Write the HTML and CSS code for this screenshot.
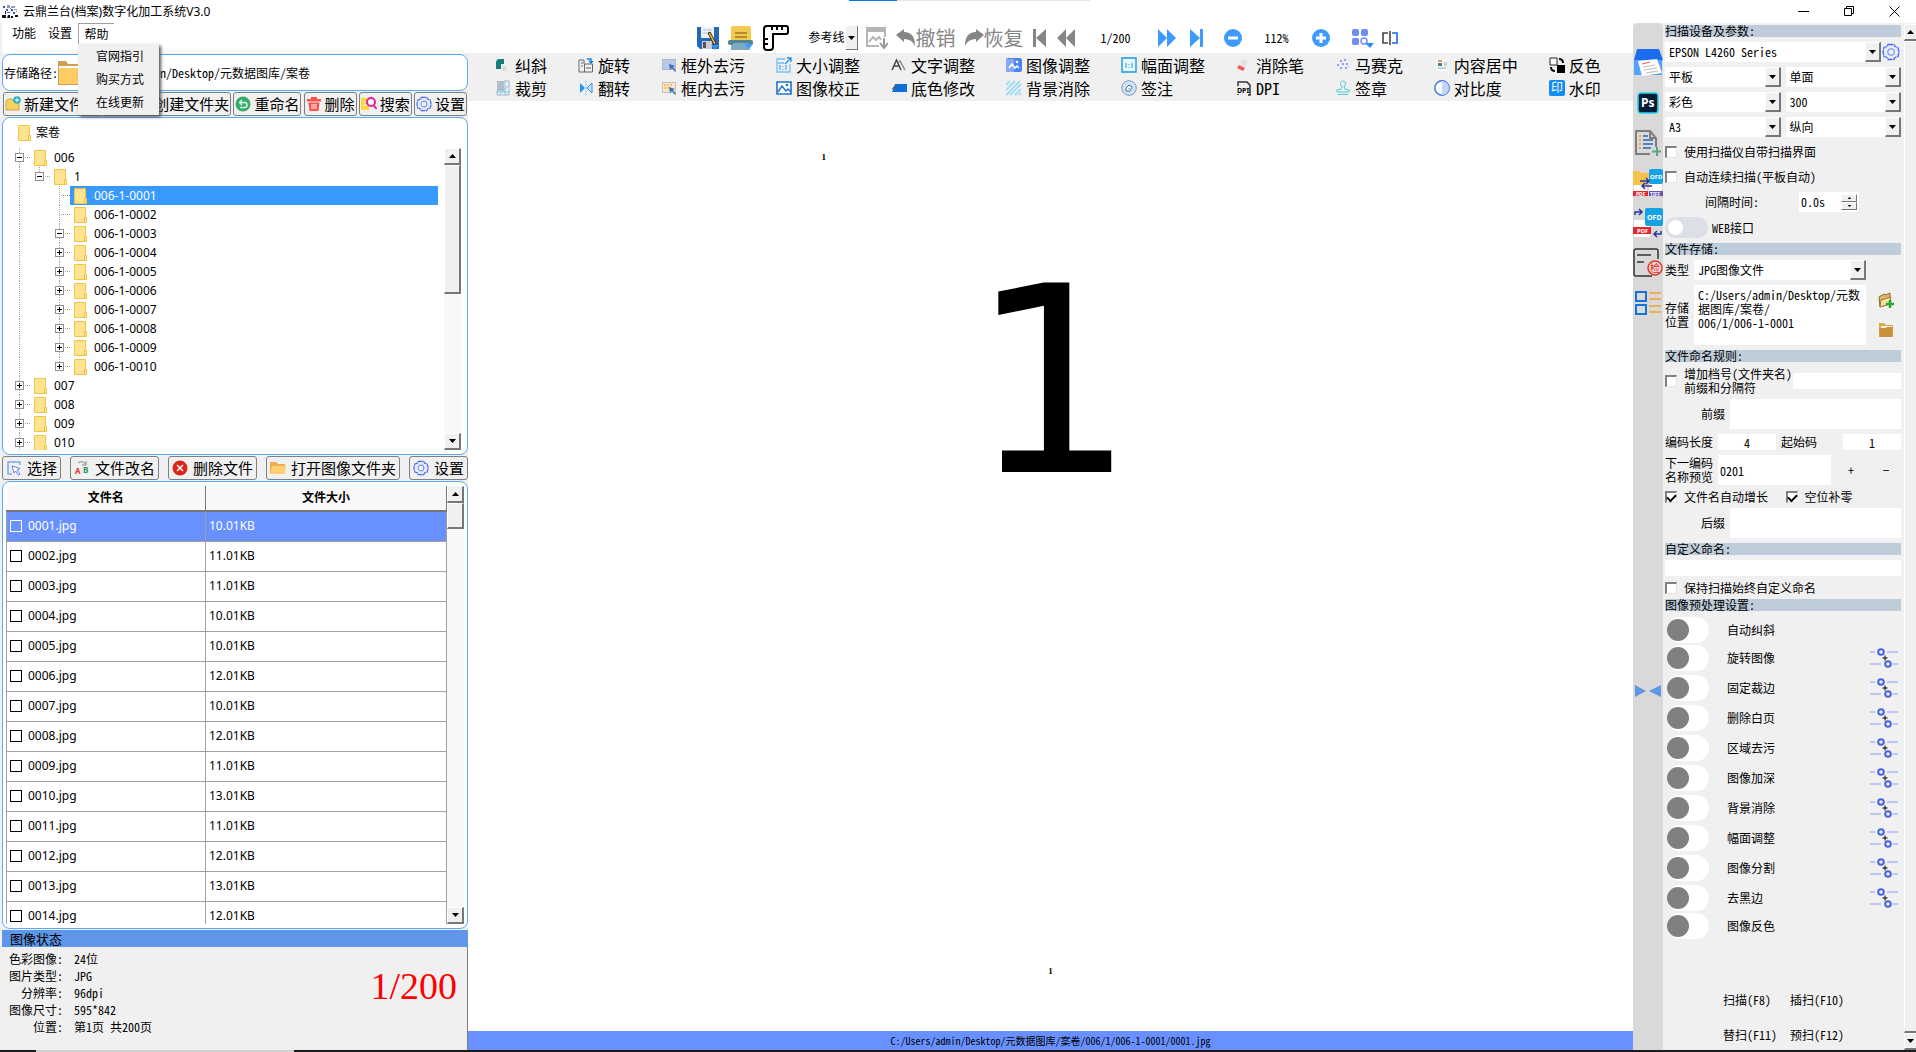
FILE: index.html
```html
<!DOCTYPE html>
<html lang="zh-CN">
<head>
<meta charset="utf-8">
<title>云鼎兰台(档案)数字化加工系统V3.0</title>
<link rel="stylesheet" href="styles.css">
</head>
<body>
<svg class="defs" aria-hidden="true">
  <symbol id="folder" viewBox="0 0 13 16"><path d="M.5.5h11v9l1 1v5H.5z" fill="#ffe391" stroke="#efc545"/><path d="M10.500 15V10.500H12.500" fill="none" stroke="#efc545"/></symbol>
  <symbol id="gear" viewBox="0 0 18 18"><path d="M6 1.500h6l1 2 3 1 1 4.500-1 4.500-3 1-1 2H6l-1-2-3-1L1 9l1-4.500 3-1z" fill="#e6ecff" stroke="#4a68e8" stroke-width="1.300" stroke-linejoin="round" stroke-dasharray="5 .6"/><circle cx="9" cy="9" r="3.200" fill="#f0f0f0" stroke="#7d96f0" stroke-width="1.200"/></symbol>
  <symbol id="adjust" viewBox="0 0 28 20"><g fill="none" stroke="#a9b6fb" stroke-width="1.600"><path d="M0 4h5M17 4h11M0 16h11M23 16h5"/></g><g fill="#f0f0f0" stroke="#4a63e0" stroke-width="2"><circle cx="11" cy="4" r="2.800"/><circle cx="18" cy="16" r="2.800"/></g><path d="M15 7.500v5M12.500 10h5" stroke="#000"/></symbol>
  <symbol id="up" viewBox="0 0 7 4"><path d="M0 4 3.500 0 7 4z"/></symbol>
  <symbol id="down" viewBox="0 0 7 4"><path d="M0 0h7L3.500 4z"/></symbol>
</svg>

<header class="titlebar">
  <svg class="applogo" viewBox="0 0 16 16"><path d="M1 2h2v2H1zM4 5h2v2H4zM9 5h2v2H9zM11 8h2v2h-2zM5 8h3v1H5z" fill="#3556c8"/><path d="M5 1h3v3H5zM9 2h4v2H9zM12 5h3v1h-3z" fill="#8d9cc0"/><path d="M0 11h4v3H0zM6 11h2v3H5zM9 12h2v2h-2zM13 11h3v2h-3zM3 7h1v3H3z" fill="#111"/><path d="M8 4h1v1H8zM14 7h1v1h-1z" fill="#d66"/></svg>
  <h1>云鼎兰台(档案)数字化加工系统V3.0</h1>
  <div class="loadbar"><i></i></div>
  <div class="winbtns">
    <button aria-label="最小化"><svg viewBox="0 0 11 11"><path d="M0 5.500h11" stroke="#000"/></svg></button>
    <button aria-label="还原"><svg viewBox="0 0 11 11"><path d="M.5 2.500h7v7h-7zM2.500 2.500v-2h7v7h-2" fill="none" stroke="#000"/></svg></button>
    <button aria-label="关闭"><svg viewBox="0 0 11 11"><path d="M.5.5l10 10M10.500.5l-10 10" stroke="#000"/></svg></button>
  </div>
</header>

<main class="app">
<aside class="left">
  <nav class="menubar">
    <button>功能</button><button>设置</button>
    <div class="menu"><button class="open">帮助</button>
      <ul class="dropdown"><li><a href="#">官网指引</a></li><li><a href="#">购买方式</a></li><li><a href="#">在线更新</a></li></ul>
    </div>
  </nav>

  <div class="pathbox panel">
    <span>存储路径:</span>
    <button class="plain" aria-label="选择路径"><svg width="24" height="24" viewBox="0 0 24 24"><path d="M0 0h8l2 3h14v21H0z" fill="#cf9f4d"/><path d="M1 5h22v2H1z" fill="#fff"/><path d="M1 7h23v16H1z" fill="#ffcc66"/></svg></button>
    <span>C:/Users/admin/Desktop/元数据图库/案卷</span>
  </div>

  <div class="btnrow tight">
    <button class="btn"><svg viewBox="0 0 16 16"><path d="M1 14V5l2-2h4l1 2h6v9z" fill="#f8d25c" stroke="#caa24a"/><circle cx="12" cy="4" r="3.800" fill="#28b5c8"/><path d="M12 2v4M10 4h4" stroke="#fff"/></svg>新建文件夹</button>
    <button class="btn"><svg viewBox="0 0 16 16"><path d="M1 14V5l2-2h4l1 2h6v9z" fill="#f8d25c" stroke="#caa24a"/></svg>批量创建文件夹</button>
    <button class="btn"><svg viewBox="0 0 16 16"><circle cx="8" cy="8" r="7.500" fill="#35ab6c"/><path d="M5 6.500h4.500a2.500 2.500 0 0 1 0 5H5M7 4 4.500 6.500 7 9" fill="none" stroke="#d9f5e5" stroke-width="1.400"/></svg>重命名</button>
    <button class="btn"><svg viewBox="0 0 16 16"><path d="M1 3h14v2.500H1zM5 1h6v2H5zM2.500 6.500h11L12.500 15h-9z" fill="#f9504b"/><path d="M6 8v5M8 8v5M10 8v5" stroke="#fff"/></svg>删除</button>
    <button class="btn"><svg viewBox="0 0 16 16"><path d="M0 2h8v12H0z" fill="#ffd633"/><path d="M2 6h4M2 9h4" stroke="#fff"/><circle cx="10" cy="6" r="4" fill="#fff" stroke="#e5209a" stroke-width="2"/><path d="m12.500 9 3 4" stroke="#e5209a" stroke-width="2"/></svg>搜索</button>
    <button class="btn"><svg><use href="#gear"/></svg>设置</button>
  </div>

  <section class="treebox panel">
    <div class="root"><svg class="fold"><use href="#folder"/></svg>案卷</div>
    <div class="scrollarea">
      <ul class="tree">
        <li><i class="g v h"><button class="minus" aria-label="折叠"></button></i><span class="node"><svg class="fold"><use href="#folder"/></svg>006</span></li>
        <li><i class="g v"></i><i class="g t h"><button class="minus" aria-label="折叠"></button></i><span class="node"><svg class="fold"><use href="#folder"/></svg>1</span></li>
        <li><i class="g v"></i><i class="g"></i><i class="g v h"></i><span class="node sel"><svg class="fold"><use href="#folder"/></svg>006-1-0001</span></li>
        <li><i class="g v"></i><i class="g"></i><i class="g v h"></i><span class="node"><svg class="fold"><use href="#folder"/></svg>006-1-0002</span></li>
        <li><i class="g v"></i><i class="g"></i><i class="g v h"><button class="minus" aria-label="折叠"></button></i><span class="node"><svg class="fold"><use href="#folder"/></svg>006-1-0003</span></li>
        <li><i class="g v"></i><i class="g"></i><i class="g v h"><button class="plus" aria-label="展开"></button></i><span class="node"><svg class="fold"><use href="#folder"/></svg>006-1-0004</span></li>
        <li><i class="g v"></i><i class="g"></i><i class="g v h"><button class="plus" aria-label="展开"></button></i><span class="node"><svg class="fold"><use href="#folder"/></svg>006-1-0005</span></li>
        <li><i class="g v"></i><i class="g"></i><i class="g v h"><button class="plus" aria-label="展开"></button></i><span class="node"><svg class="fold"><use href="#folder"/></svg>006-1-0006</span></li>
        <li><i class="g v"></i><i class="g"></i><i class="g v h"><button class="plus" aria-label="展开"></button></i><span class="node"><svg class="fold"><use href="#folder"/></svg>006-1-0007</span></li>
        <li><i class="g v"></i><i class="g"></i><i class="g v h"><button class="plus" aria-label="展开"></button></i><span class="node"><svg class="fold"><use href="#folder"/></svg>006-1-0008</span></li>
        <li><i class="g v"></i><i class="g"></i><i class="g v h"><button class="plus" aria-label="展开"></button></i><span class="node"><svg class="fold"><use href="#folder"/></svg>006-1-0009</span></li>
        <li><i class="g v"></i><i class="g"></i><i class="g t h"><button class="plus" aria-label="展开"></button></i><span class="node"><svg class="fold"><use href="#folder"/></svg>006-1-0010</span></li>
        <li><i class="g v h"><button class="plus" aria-label="展开"></button></i><span class="node"><svg class="fold"><use href="#folder"/></svg>007</span></li>
        <li><i class="g v h"><button class="plus" aria-label="展开"></button></i><span class="node"><svg class="fold"><use href="#folder"/></svg>008</span></li>
        <li><i class="g v h"><button class="plus" aria-label="展开"></button></i><span class="node"><svg class="fold"><use href="#folder"/></svg>009</span></li>
        <li><i class="g v h"><button class="plus" aria-label="展开"></button></i><span class="node"><svg class="fold"><use href="#folder"/></svg>010</span></li>
      </ul>
      <div class="sb"><span class="sbb"><svg><use href="#up"/></svg></span><i class="thumb t1"></i><span class="sbb last"><svg><use href="#down"/></svg></span></div>
    </div>
  </section>

  <div class="btnrow">
    <button class="btn"><svg viewBox="0 0 16 16"><path d="M14 5V2H2v12h4" fill="none" stroke="#7ea8ee" stroke-width="1.500"/><path d="m6 6 8 2.500-3 1.500 3 4-1.500 1-3-4L8 13z" fill="#fff" stroke="#5b86dd"/></svg>选择</button>
    <button class="btn"><svg viewBox="0 0 16 16"><path d="M4 3q4-3 8 1M12 1v4H8" fill="none" stroke="#888"/><text x="1" y="14" font-size="8" font-weight="bold" fill="#e0302a">A</text><text x="9" y="13" font-size="8" font-weight="bold" fill="#1d9a50">B</text></svg>文件改名</button>
    <button class="btn"><svg viewBox="0 0 16 16"><circle cx="8" cy="8" r="7.500" fill="#dd2418"/><path d="m5 5 6 6m0-6-6 6" stroke="#fff" stroke-width="1.500"/></svg>删除文件</button>
    <button class="btn"><svg viewBox="0 0 16 16"><path d="M0 2h6l2 2h7v10H0z" fill="#e9b04c"/><path d="M2 6h14l-1 8H0z" fill="#ffce70"/></svg>打开图像文件夹</button>
    <button class="btn"><svg><use href="#gear"/></svg>设置</button>
  </div>

  <section class="filebox panel">
    <div class="tablewrap">
    <table>
      <colgroup><col class="c1"><col></colgroup>
      <thead><tr><th>文件名</th><th>文件大小</th></tr></thead>
      <tbody>
        <tr class="on"><td><label><input type="checkbox">0001.jpg</label></td><td>10.01KB</td></tr>
        <tr><td><label><input type="checkbox">0002.jpg</label></td><td>11.01KB</td></tr>
        <tr><td><label><input type="checkbox">0003.jpg</label></td><td>11.01KB</td></tr>
        <tr><td><label><input type="checkbox">0004.jpg</label></td><td>10.01KB</td></tr>
        <tr><td><label><input type="checkbox">0005.jpg</label></td><td>10.01KB</td></tr>
        <tr><td><label><input type="checkbox">0006.jpg</label></td><td>12.01KB</td></tr>
        <tr><td><label><input type="checkbox">0007.jpg</label></td><td>10.01KB</td></tr>
        <tr><td><label><input type="checkbox">0008.jpg</label></td><td>12.01KB</td></tr>
        <tr><td><label><input type="checkbox">0009.jpg</label></td><td>11.01KB</td></tr>
        <tr><td><label><input type="checkbox">0010.jpg</label></td><td>13.01KB</td></tr>
        <tr><td><label><input type="checkbox">0011.jpg</label></td><td>11.01KB</td></tr>
        <tr><td><label><input type="checkbox">0012.jpg</label></td><td>12.01KB</td></tr>
        <tr><td><label><input type="checkbox">0013.jpg</label></td><td>13.01KB</td></tr>
        <tr><td><label><input type="checkbox">0014.jpg</label></td><td>12.01KB</td></tr>
      </tbody>
    </table>
    </div>
    <div class="sb"><span class="sbb"><svg><use href="#up"/></svg></span><i class="thumb t2"></i><span class="sbb last"><svg><use href="#down"/></svg></span></div>
  </section>

  <section class="status">
    <h2>图像状态</h2>
    <div class="info">
      <dl>
        <dt>色彩图像:</dt><dd>24位</dd>
        <dt>图片类型:</dt><dd>JPG</dd>
        <dt>分辨率:</dt><dd>96dpi</dd>
        <dt>图像尺寸:</dt><dd>595*842</dd>
        <dt>位置:</dt><dd>第1页 共200页</dd>
      </dl>
      <strong>1/200</strong>
    </div>
  </section>
</aside>

<section class="center">
  <div class="toolbar">
    <button class="w24" aria-label="保存"><svg width="22" height="24" viewBox="0 0 22 24"><path d="M0 1h22v22H3l-3-3z" fill="#2468bd"/><path d="M4 1h13v11H4z" fill="#eef3f8"/><path d="M6 4h9M6 7h9" stroke="#b9c6d6"/><path d="M5 15h10v8H5z" fill="#c9ced4"/><path d="M6 16h3v6H6z" fill="#555"/><path d="m11 7 2-1 6 11-2 2z" fill="#f2b21b" stroke="#333"/><path d="M14 19h8l-4 5z" fill="#3d8df5"/></svg></button>
    <button class="w26" aria-label="打印"><svg width="26" height="24" viewBox="0 0 26 24"><rect x="3" width="20" height="16" rx="2" fill="#f3c94f"/><path d="M7 7h12M7 11h12" stroke="#9a7b25" stroke-width="1.500"/><rect y="14" width="25" height="5" rx="2" fill="#4f8491"/><path d="M3 24v-4l3-3h14l2 7z" fill="#7fa9c0"/><path d="M16 18h9l-4 5z" fill="#3d9bff"/></svg></button>
    <button class="w28" aria-label="标尺"><svg width="26" height="26" viewBox="0 0 26 26"><path d="M4 1h19q2 0 2 2v4q0 2-2 2H10v13q0 3-3 3H4q-3 0-3-3V4q0-3 3-3z" fill="#fff" stroke="#000" stroke-width="2"/><path d="M9 2v3M14 2v3M19 2v3M1 14h4M1 19h4" stroke="#000" stroke-width="2"/></svg></button>
    <span class="combo guide"><select aria-label="参考线"><option>参考线</option></select><i class="arr"><svg><use href="#down"/></svg></i></span>
    <button class="w22" aria-label="导出"><svg width="22" height="22" viewBox="0 0 22 22"><path d="M19 0v10M13 19H1V0" fill="none" stroke="#b5b5b5" stroke-width="2"/><path d="M0 0h20v5H0z" fill="#b5b5b5"/><path d="m3 15 4-5 3 3 3-3 2 3" fill="none" stroke="#b5b5b5" stroke-width="2"/><path d="M18 11v9m-4-4 4 5 4-5" fill="none" stroke="#999" stroke-width="2"/></svg></button>
    <button class="undo"><svg width="20" height="18" viewBox="0 0 20 18"><path d="M0 6 8 0v3q11 0 11 14-3-7-11-7v3z" fill="#868686"/></svg>撤销</button>
    <button class="undo"><svg width="20" height="18" viewBox="0 0 20 18"><path d="M20 6 12 0v3Q1 3 1 17q3-7 11-7v3z" fill="#868686"/></svg>恢复</button>
    <button class="w16" aria-label="首页"><svg width="13" height="18" viewBox="0 0 13 18"><path d="M0 0h3v18H0zM13 0v18L3 9z" fill="#868686"/></svg></button>
    <button class="w20" aria-label="上一页"><svg width="18" height="18" viewBox="0 0 18 18"><path d="M9 0v18L0 9zM18 0v18L9 9z" fill="#868686"/></svg></button>
    <output class="w64">1/200</output>
    <button class="w22" aria-label="下一页"><svg width="18" height="18" viewBox="0 0 18 18"><path d="M0 0v18l9-9zM9 0v18l9-9z" fill="#3d9bff"/></svg></button>
    <button class="w30" aria-label="末页"><svg width="13" height="18" viewBox="0 0 13 18"><path d="M10 0h3v18h-3zM0 0v18L10 9z" fill="#3d9bff"/></svg></button>
    <button class="w18" aria-label="缩小"><svg width="18" height="18" viewBox="0 0 18 18"><circle cx="9" cy="9" r="9" fill="#3d9bff"/><path d="M4 9h10" stroke="#fff" stroke-width="3"/></svg></button>
    <output class="w54">112%</output>
    <button class="w18" aria-label="放大"><svg width="18" height="18" viewBox="0 0 18 18"><circle cx="9" cy="9" r="9" fill="#3d9bff"/><path d="M4 9h10M9 4v10" stroke="#fff" stroke-width="3"/></svg></button>
    <button class="w36" aria-label="缩略图"><svg width="22" height="20" viewBox="0 0 22 20"><g fill="#6f8df5"><rect y="1" width="7" height="7" rx="2"/><rect x="9" y="1" width="7" height="7" rx="2"/><rect y="10" width="7" height="7" rx="2"/></g><circle cx="12" cy="13" r="3" fill="none" stroke="#6f8df5" stroke-width="1.500"/><path d="M13 15h9l-4 5z" fill="#2f8bf0"/></svg></button>
    <button class="w16" aria-label="分栏"><svg width="16" height="14" viewBox="0 0 16 14"><path d="M6 2H1v10h5" fill="none" stroke="#444" stroke-width="1.600"/><path d="M8 0v14" stroke="#444" stroke-width="1.600"/><path d="M10 2h5v10h-5" fill="none" stroke="#1769e8" stroke-width="1.600"/></svg></button>
  </div>

  <div class="tools">
    <button><svg viewBox="0 0 16 16"><path d="M1 12V6q0-4 4-4h4v5H6v5z" fill="#177c79"/><path d="M7 8l5 2v4H7z" fill="#ddd"/></svg>纠斜</button>
    <button><svg viewBox="0 0 16 16"><path d="M2 1h7v10H2z" fill="#b3bcc9"/><path d="M9 1h5v14H2v-4" fill="none" stroke="#a9b7c4"/><path d="M10 1v14M1 12h14M4 15 14 5" stroke="#7cc7ec"/></svg>裁剪</button>
    <button><svg viewBox="0 0 16 16"><path d="M7 15H1V3h5v4M6.500 7h8v8h-8zM8 11h5M3 6h2M3 9h2" fill="none" stroke="#666"/><path d="M9 2h4v3m-2-1 2 2 2-2" fill="none" stroke="#1684e0" stroke-width="1.400"/></svg>旋转</button>
    <button><svg viewBox="0 0 16 16"><path d="M2 3v10l5-5z" fill="#2a93f5"/><path d="M14 3v10L9 8z" fill="#c9e4ff" stroke="#2a93f5"/><path d="M8 1v14" stroke="#7cc4ff" stroke-dasharray="2 1"/></svg>翻转</button>
    <button><svg viewBox="0 0 16 16"><path d="M1.500 2.500h13v10h-13z" fill="#b9c9ea" stroke="#8b93a5" stroke-dasharray="1 1"/><path d="m8 7 6 2-2 1 3 4-1 1-3-4-2 2z" fill="#3f6fae"/></svg>框外去污</button>
    <button><svg viewBox="0 0 16 16"><path d="M1.500 2.500h13v10h-13z" fill="#f9e9cb" stroke="#999" stroke-dasharray="1 1"/><path d="M3 5h9M3 8h6" stroke="#f0c273" stroke-width="2" stroke-dasharray="2 1"/><path d="m8 7 6 2-2 1 3 4-1 1-3-4-2 2z" fill="#3f6fae"/></svg>框内去污</button>
    <button><svg viewBox="0 0 16 16"><path d="M9 2H1v13h13V7M1 6h7" fill="none" stroke="#79bdf0" stroke-width="1.300"/><path d="m9 7 6-6m-4 0h4v4" fill="none" stroke="#2a93e5" stroke-width="1.400"/><path d="M4 8v5M7 9v1M7 12v1M10 8v5" stroke="#55aeea" stroke-width="1.300"/></svg>大小调整</button>
    <button><svg viewBox="0 0 16 16"><path d="M1 2h14v12H1z" fill="#fff" stroke="#1f74c9" stroke-width="1.600"/><path d="m2 12 4-6 4 5 2-2 3 3" fill="none" stroke="#1f74c9" stroke-width="1.500"/><circle cx="11" cy="5" r="1.300" fill="#1f74c9"/></svg>图像校正</button>
    <button><svg viewBox="0 0 16 16"><path d="m1 13 4.500-10L10 13M3 9h5" fill="none" stroke="#444" stroke-width="1.500"/><path d="m8 5 1-1 5 9" fill="none" stroke="#888" stroke-width="1.500"/></svg>文字调整</button>
    <button><svg viewBox="0 0 16 16"><path d="M4 4h12v8H1z" fill="#0c70d8"/><path d="M1 9l3-3v3l3-2" fill="none" stroke="#555"/></svg>底色修改</button>
    <button><svg viewBox="0 0 16 16"><rect y="1" width="16" height="14" rx="2" fill="#4e83f4"/><path d="M0 2h8v13H0z" fill="#86a9f8"/><path d="m3 11 3-4 3 4 2-2 2 2" fill="none" stroke="#fff" stroke-width="1.500"/><circle cx="11" cy="5" r="1.300" fill="#fff"/></svg>图像调整</button>
    <button><svg viewBox="0 0 16 16"><path d="M0 5l4-4M0 10l9-9M0 15 14 1M4 15 15 4M9 15l6-6M13 15l2-2" stroke="#9fdcf5" stroke-width="1.800"/></svg>背景消除</button>
    <button><svg viewBox="0 0 16 16"><path d="M1 1h14v14H1z" fill="#eaf6ff" stroke="#189ad8" stroke-width="1.400"/><path d="M5 6v5M8 7v1M8 10v1M11 6v5" stroke="#3bb0e5" stroke-width="1.200"/></svg>幅面调整</button>
    <button><svg viewBox="0 0 16 16"><circle cx="8" cy="8" r="7.300" fill="#d2e2f5" stroke="#7d9cc8"/><path d="M5 11V8l3-3 3 2-2 4zM8 8v1" fill="#fff" stroke="#4a6a9a"/></svg>签注</button>
    <button><svg viewBox="0 0 16 16"><path d="m6 2 6 2-2 6-6-2z" fill="#dfe3ec"/><path d="m3 8 6 3-2 3-6-3z" fill="#f15a5a"/></svg>消除笔</button>
    <button><svg viewBox="0 0 16 16"><path d="M2 6V2h9l3 3v10h-2M2 14v1" fill="none" stroke="#333" stroke-width="1.500"/><text x="1" y="13" font-size="7" font-weight="bold">DPI</text></svg>DPI</button>
    <button><svg viewBox="0 0 16 16"><path d="M5 3h2v2H5zM9 2h2v2H9zM2 7h2v2H2zM7 6h2v2H7zM11 6h2v2h-2zM5 10h2v2H5zM10 10h2v2h-2zM13 9h1v1h-1z" fill="#8ea0f4"/></svg>马赛克</button>
    <button><svg viewBox="0 0 16 16"><path d="M6 9q2-2 0-4a2.500 2.500 0 1 1 4 0q-2 2 0 4l4 1v2H2v-2zM3 14.500h10" fill="#e1f7fa" stroke="#5bc5d5"/></svg>签章</button>
    <button><svg viewBox="0 0 16 16"><path d="M2 2h11v12H2z" fill="#fafafa"/><path d="M4 4h4" stroke="#e0702a" stroke-width="1.500"/><path d="M4 6h4v3H4z" fill="#4a7d95"/><path d="M10 6h3M10 8h3M4 11h8" stroke="#8aa"/></svg>内容居中</button>
    <button><svg viewBox="0 0 16 16"><circle cx="8" cy="8" r="7.200" fill="#fff" stroke="#4475e0" stroke-width="1.500"/><path d="M8 1a7 7 0 0 1 0 14z" fill="#c2d5fa"/></svg>对比度</button>
    <button><svg viewBox="0 0 16 16"><path d="M1 1h7v7H1z" fill="#fff" stroke="#222"/><path d="M8 8h8v8H8z"/><path d="M10 2q4 0 4 4M6 14q-4 0-4-4" fill="none" stroke="#111" stroke-width="2"/></svg>反色</button>
    <button><svg viewBox="0 0 16 16"><rect width="16" height="16" rx="2" fill="#118cf2"/><text x="2" y="12" font-size="12" fill="#fff">印</text></svg>水印</button>
  </div>

  <article class="sheet">
    <p class="mark head">1</p>
    <p class="big">1</p>
    <p class="mark foot">1</p>
  </article>
  <footer class="pathbar">C:/Users/admin/Desktop/元数据图库/案卷/006/1/006-1-0001/0001.jpg</footer>
</section>

<aside class="strip">
  <button aria-label="扫描"><svg width="30" height="28" viewBox="0 0 30 28"><path d="M4 0h22l4 11H1z" fill="#1b6df0"/><path d="M1 11h28v15H1z" fill="#58a3fa"/><path d="m5 12 19-2 5 14-20 3z" fill="#fff"/><path d="m9 15 8-2" stroke="#e55"/><path d="m10 18 12-2M11 21l13-2M13 24l12-2" stroke="#bbb"/></svg></button>
  <button aria-label="Photoshop"><svg width="22" height="22" viewBox="0 0 22 22"><rect x="1" y="1" width="20" height="20" rx="3" fill="#001e36" stroke="#26d3ee" stroke-width="1.500"/><text x="4" y="15" font-size="12" font-weight="bold" fill="#fff">Ps</text></svg></button>
  <button aria-label="新增列表"><svg width="26" height="26" viewBox="0 0 26 26"><path d="M15 24H1V1h14l6 7v9M15 1v7h6" fill="none" stroke="#7d7d7d" stroke-width="2"/><path d="M4 6h2M4 10h2M4 14h2M4 18h2" stroke="#e9a83c" stroke-width="2"/><path d="M8 6h5M8 10h10M8 14h10M8 18h8" stroke="#5980c0" stroke-width="2"/><path d="M22 17v9M17 21.500h9" stroke="#5aa77a" stroke-width="2"/></svg></button>
  <button aria-label="格式转换"><svg width="30" height="28" viewBox="0 0 30 28"><path d="M0 2h6l2 2h8v12H0z" fill="#f5c24a"/><rect x="16" width="14" height="15" rx="2" fill="#16a3e6"/><text x="17" y="10" font-size="6" font-weight="bold" fill="#fff">OFD</text><path d="M1 16h13v6H1zM16 15h13v7H16z" fill="#fff"/><path d="M7 12h9m-3-3 3 3-3 3M19 17H9m3-3-3 3 3 3" fill="none" stroke="#2438a8" stroke-width="1.500"/><path d="M0 22h15v5H0z" fill="#e5252f"/><path d="M16 22h14v5H16z" fill="#6450b4"/><text x="3" y="27" font-size="5" font-weight="bold" fill="#fff">PDF</text><text x="17" y="27" font-size="5" font-weight="bold" fill="#fff">TIFF</text></svg></button>
  <button aria-label="OFD转换"><svg width="30" height="30" viewBox="0 0 30 30"><path d="M1 12h11l5 5v12H1z" fill="#fff"/><rect x="12" width="18" height="18" rx="2" fill="#16a3e6"/><text x="14" y="12" font-size="7" font-weight="bold" fill="#fff">OFD</text><path d="M2 7V4h7M6 1l3 3-3 3M28 23v3h-7m3-3-3 3 3 3" fill="none" stroke="#2438a8" stroke-width="1.500"/><path d="M0 19h18v7H0z" fill="#e5252f"/><text x="4" y="25" font-size="6" font-weight="bold" fill="#fff">PDF</text></svg></button>
  <button aria-label="质检"><svg width="30" height="30" viewBox="0 0 30 30"><path d="M19 28H3q-2 0-2-2V3q0-2 2-2h20q2 0 2 2v8" fill="none" stroke="#333" stroke-width="1.500"/><path d="M4 7h14M4 14h7" stroke="#333" stroke-width="1.500"/><circle cx="22" cy="20" r="7" fill="#f6d9d6" stroke="#df3a2b" stroke-width="1.500"/><text x="17" y="24" font-size="10" fill="#df2a1b">检</text></svg></button>
  <button aria-label="列表"><svg width="26" height="26" viewBox="0 0 26 26"><path d="M1 2h10v9H1zM1 15h10v9H1z" fill="none" stroke="#1474d8" stroke-width="2"/><path d="M14 3h12M14 9h12M14 16h12M14 22h12" stroke="#f8a226" stroke-width="1.500"/></svg></button>
  <button class="fold-btn" aria-label="收起"><svg width="26" height="12" viewBox="0 0 26 12"><path d="M0 0v12l11-6zM26 0v12L14 6z" fill="#5f96e8"/></svg></button>
</aside>

<aside class="right">
  <form class="form">
    <h2>扫描设备及参数:</h2>
    <div class="row"><span class="combo grow"><select aria-label="扫描设备"><option>EPSON L4260 Series</option></select><i class="arr"><svg><use href="#down"/></svg></i></span><button type="button" class="gearbtn" aria-label="设备设置"><svg width="18" height="18"><use href="#gear"/></svg></button></div>
    <div class="row two"><span class="combo"><select aria-label="进纸"><option>平板</option></select><i class="arr"><svg><use href="#down"/></svg></i></span><span class="combo"><select aria-label="单双面"><option>单面</option></select><i class="arr"><svg><use href="#down"/></svg></i></span></div>
    <div class="row two"><span class="combo"><select aria-label="颜色"><option>彩色</option></select><i class="arr"><svg><use href="#down"/></svg></i></span><span class="combo"><select aria-label="分辨率"><option>300</option></select><i class="arr"><svg><use href="#down"/></svg></i></span></div>
    <div class="row two"><span class="combo"><select aria-label="纸张"><option>A3</option></select><i class="arr"><svg><use href="#down"/></svg></i></span><span class="combo"><select aria-label="方向"><option>纵向</option></select><i class="arr"><svg><use href="#down"/></svg></i></span></div>
    <label class="row tick"><input type="checkbox">使用扫描仪自带扫描界面</label>
    <label class="row tick"><input type="checkbox">自动连续扫描(平板自动)</label>
    <div class="row interval"><label for="gap">间隔时间:</label><span class="spin"><input id="gap" value="0.0s"><span class="steps"><button type="button" aria-label="增加"><svg><use href="#up"/></svg></button><button type="button" aria-label="减少"><svg><use href="#down"/></svg></button></span></span></div>
    <label class="row web"><input type="checkbox" class="switch sm">WEB接口</label>

    <h2>文件存储:</h2>
    <div class="row store"><label for="type">类型</label><span class="combo"><select id="type"><option>JPG图像文件</option></select><i class="arr"><svg><use href="#down"/></svg></i></span></div>
    <div class="row store"><label for="place">存储位置</label><textarea id="place">C:/Users/admin/Desktop/元数据图库/案卷/
006/1/006-1-0001</textarea>
      <span class="placebtns"><button type="button" aria-label="新建文件夹"><svg width="16" height="16" viewBox="0 0 16 16"><path d="M1 5 6 2l1 1 5-2v11L2 15z" fill="#dcb765" stroke="#8c6a2a"/><path d="M3 8l10-3-2 7-9 3z" fill="#f6dfa5" stroke="#a07a33"/><path d="M12 8v8M8 12h8" stroke="#29a62f" stroke-width="2.500"/></svg></button><button type="button" aria-label="打开文件夹"><svg width="16" height="16" viewBox="0 0 16 16"><path d="M1 1h5l2 2h7v12H1z" fill="#d9a750"/><path d="M3 4h11v3H3z" fill="#fff4dc"/><path d="M1 6h7l1-1h6l-1 10H2z" fill="#c98f3a"/></svg></button></span></div>

    <h2>文件命名规则:</h2>
    <div class="row prefixrow"><label class="tick"><input type="checkbox">增加档号(文件夹名)<br>前缀和分隔符</label><input class="short" aria-label="分隔符"></div>
    <div class="row fix"><label for="pre">前缀</label><input id="pre"></div>
    <div class="row codes"><label for="len">编码长度</label><input id="len" value="4"><label for="start">起始码</label><input id="start" value="1"></div>
    <div class="row next"><label for="nx">下一编码名称预览</label><input id="nx" value="0201"><button type="button">+</button><button type="button">−</button></div>
    <div class="row two checks"><label class="tick"><input type="checkbox" checked>文件名自动增长</label><label class="tick"><input type="checkbox" checked>空位补零</label></div>
    <div class="row fix"><label for="suf">后缀</label><input id="suf"></div>

    <h2>自定义命名:</h2>
    <div class="row"><input class="short grow" aria-label="自定义命名"></div>
    <div class="row checks"><label class="tick"><input type="checkbox">保持扫描始终自定义命名</label></div>

    <h2>图像预处理设置:</h2>
    <ul class="switches">
      <li><label><input type="checkbox" class="switch">自动纠斜</label></li>
      <li><label><input type="checkbox" class="switch">旋转图像</label><button type="button" aria-label="旋转图像设置"><svg><use href="#adjust"/></svg></button></li>
      <li><label><input type="checkbox" class="switch">固定裁边</label><button type="button" aria-label="固定裁边设置"><svg><use href="#adjust"/></svg></button></li>
      <li><label><input type="checkbox" class="switch">删除白页</label><button type="button" aria-label="删除白页设置"><svg><use href="#adjust"/></svg></button></li>
      <li><label><input type="checkbox" class="switch">区域去污</label><button type="button" aria-label="区域去污设置"><svg><use href="#adjust"/></svg></button></li>
      <li><label><input type="checkbox" class="switch">图像加深</label><button type="button" aria-label="图像加深设置"><svg><use href="#adjust"/></svg></button></li>
      <li><label><input type="checkbox" class="switch">背景消除</label><button type="button" aria-label="背景消除设置"><svg><use href="#adjust"/></svg></button></li>
      <li><label><input type="checkbox" class="switch">幅面调整</label><button type="button" aria-label="幅面调整设置"><svg><use href="#adjust"/></svg></button></li>
      <li><label><input type="checkbox" class="switch">图像分割</label><button type="button" aria-label="图像分割设置"><svg><use href="#adjust"/></svg></button></li>
      <li><label><input type="checkbox" class="switch">去黑边</label><button type="button" aria-label="去黑边设置"><svg><use href="#adjust"/></svg></button></li>
      <li><label><input type="checkbox" class="switch">图像反色</label></li>
    </ul>
    <div class="scanbtns"><button type="button">扫描(F8)</button><button type="button">插扫(F10)</button><button type="button">替扫(F11)</button><button type="button">预扫(F12)</button></div>
  </form>
  <div class="sb narrow"><span class="sbb"><svg><use href="#up"/></svg></span><i class="thumb t3"></i><span class="sbb last"><svg><use href="#down"/></svg></span></div>
</aside>
</main>
<div class="taskline"><i></i></div>
</body>
</html>
```
FILE: styles.css
```css
* { box-sizing: border-box; margin: 0; padding: 0; }
:root {
  --ui: "Noto Sans", "Noto Sans CJK SC", sans-serif;
  --song: "Noto Sans Mono CJK SC", "Noto Sans CJK SC", sans-serif;
}
html, body { height: 100%; }
body { display: flex; flex-direction: column; overflow: hidden; background: #f0f0f0; color: #000; font: 12px/14px var(--song); }
button, input, select, textarea { font: inherit; color: inherit; border: 0; background: none; border-radius: 0; outline: 0; }
button { display: inline-flex; align-items: center; justify-content: center; white-space: nowrap; }
ul { list-style: none; }
i { font-style: normal; }
svg { flex: none; display: block; }
svg text { font-family: var(--ui); }
.defs { width: 0; height: 0; position: absolute; }
h1, h2 { font-size: 12px; font-weight: normal; }

.titlebar { display: grid; grid-template-columns: 16px 1fr 241px 1fr; gap: 5px; height: 23px; flex: none; padding-left: 2px; background: #fff; align-items: center; }
.titlebar h1 { font-family: var(--ui); line-height: 23px; }
.applogo { width: 16px; height: 16px; }
.loadbar { height: 1px; align-self: start; background: #e5e5e5; }
.loadbar i { display: block; width: 48px; height: 1px; background: #0078d7; }
.winbtns { display: flex; justify-content: flex-end; gap: 1px; }
.winbtns button { width: 45px; height: 20px; }
.winbtns svg { width: 11px; height: 11px; }
.winbtns button:last-child { width: 43px; }

.app { flex: 1; min-height: 0; display: grid; grid-template-columns: 468px 1fr 30px 253px; }
.taskline { height: 2px; flex: none; background: #1b1b1f; padding-left: 36px; }
.taskline i { display: block; width: 258px; height: 2px; background: #d0d0d0; }

/* left column */
.left { display: flex; flex-direction: column; gap: 1px; min-height: 0; padding-left: 2px; }
.panel { background: #fff; border: 1px solid #5aabff; border-radius: 8px; }
.menubar { display: flex; height: 30px; flex: none; background: #fff; font-family: var(--ui); align-items: flex-start; }
.menubar > button { width: 36px; height: 22px; }
.menubar > button:first-child { width: 40px; padding-left: 4px; }
.menu { position: relative; z-index: 5; }
.menu .open { width: 36px; height: 22px; border: solid #a0a0a0; border-width: 1px 0 0 1px; }
.dropdown { position: absolute; left: 0; top: 21px; width: 81px; padding: 1px 0; background: #f0f0f0; box-shadow: 2px 2px 3px #555; }
.dropdown a { display: block; padding-left: 18px; line-height: 23px; color: #000; text-decoration: none; white-space: nowrap; }

.pathbox { display: flex; align-items: center; height: 37px; flex: none; padding-left: 1px; }
.btnrow { display: flex; justify-content: space-between; height: 24px; flex: none; }
.btnrow.tight { padding: 0 1px; }
.btn { height: 24px; gap: 3px; padding: 0 1px; border: 1px solid #808080; border-radius: 3px; font-size: 15px; background: #f0f0f0; }
.btn svg { width: 16px; height: 16px; }
.btnrow:not(.tight) .btn { padding: 0 3px; gap: 5px; }

.treebox { height: 338px; flex: none; display: flex; flex-direction: column; font-family: var(--ui); }
.root { display: flex; align-items: center; gap: 5px; height: 30px; flex: none; padding-left: 15px; }
.scrollarea { display: flex; height: 302px; padding-right: 6px; }
.tree { flex: 1; overflow: hidden; padding: 0 6px 0 7px; }
.tree li { display: flex; height: 19px; align-items: stretch; }
.g { width: 20px; flex: none; display: flex; align-items: center; justify-content: center; background-repeat: no-repeat; --dv: repeating-linear-gradient(to bottom, #a0a0a0 0 1px, transparent 1px 2px); --dh: repeating-linear-gradient(to right, #a0a0a0 0 1px, transparent 1px 2px); }
.g.v { background-image: var(--dv); background-size: 1px 100%; background-position: 9px 0; }
.g.v.h { background-image: var(--dv), var(--dh); background-size: 1px 100%, 9px 1px; background-position: 9px 0, 11px 9px; }
.g.t.h { background-image: var(--dv), var(--dh); background-size: 1px 50%, 9px 1px; background-position: 9px 0, 11px 9px; }
.g button { width: 9px; height: 9px; margin-right: 1px; border: 1px solid #909090; background-color: #fff; background-repeat: no-repeat; background-position: center; }
.g .minus { background-image: linear-gradient(#000, #000); background-size: 5px 1px; }
.g .plus { background-image: linear-gradient(#000, #000), linear-gradient(#000, #000); background-size: 5px 1px, 1px 5px; }
.node { flex: 1; display: flex; align-items: center; gap: 7px; padding-left: 4px; }
.node.sel { background: #3899ff; color: #fff; }
.fold { width: 13px; height: 16px; }

.sb { width: 17px; flex: none; display: flex; flex-direction: column; background: #f8f8f8; }
.sbb, .arr, .thumb { background: #f0f0f0; border: solid; border-width: 1px 2px 2px 1px; border-color: #fff #777 #777 #fff; display: flex; align-items: center; justify-content: center; }
.sbb { height: 17px; flex: none; }
.sbb.last { margin-top: auto; }
.sbb svg, .arr svg { width: 7px; height: 4px; }
.thumb { flex: none; }
.t1 { height: 129px; }
.t2 { height: 26px; }
.t3 { flex: 1; }

.filebox { flex: 1; min-height: 0; display: flex; padding: 4px 3px; font-family: var(--ui); }
.tablewrap { flex: 1; overflow: hidden; }
table { width: 100%; border-collapse: collapse; table-layout: fixed; }
.c1 { width: 199px; }
th { height: 25px; background: #f8f8f8; border-right: 1px solid #777; border-bottom: 2px solid #777; line-height: 22px; }
td { height: 30px; border: 1px solid #a0a0a0; padding: 0 3px; line-height: 28px; }
td label { display: flex; align-items: center; gap: 6px; }
td input { appearance: none; width: 12px; height: 12px; border: 1px solid #000; }
.on td { background: #6891ff; color: #fff; }
.on input { border-color: #fff; }

.status h2 { height: 17px; padding-left: 8px; line-height: 17px; font-size: 13px; background: #5f96e8; }
.info { height: 103px; display: flex; justify-content: space-between; padding: 3px 10px 0 7px; border-right: 1px solid #808080; }
dl { display: grid; grid-template-columns: 54px auto; grid-auto-rows: 17px; column-gap: 11px; line-height: 17px; }
dt { text-align: right; }
.info strong { font: 38px/72px "Liberation Serif", serif; color: #f00; }

/* centre column */
.center { display: flex; flex-direction: column; min-width: 0; background: #fff; }
.toolbar { height: 30px; flex: none; display: flex; align-items: center; justify-content: center; gap: 8px; padding-right: 8px; }
.toolbar > * { flex: none; }
.w16 { width: 16px; } .w18 { width: 18px; } .w20 { width: 20px; } .w22 { width: 22px; } .w24 { width: 24px; } .w26 { width: 26px; }
.w28 { width: 28px; } .w30 { width: 30px; } .w36 { width: 36px; } .w54 { width: 54px; } .w64 { width: 64px; }
.toolbar .w30 { justify-content: flex-start; padding-left: 4px; }
.toolbar .w36 { justify-content: flex-end; }
output { text-align: center; }
.undo { width: 60px; font-size: 20px; line-height: 24px; color: #868686; }
.combo { display: grid; height: 20px; background: #fff; }
.combo select { grid-area: 1 / 1; width: 100%; min-width: 0; appearance: none; padding-left: 4px; }
.combo .arr { grid-area: 1 / 1; justify-self: end; width: 16px; pointer-events: none; }
.combo.guide { width: 60px; height: 24px; font-family: var(--ui); }
.guide select { padding-left: 11px; }
.combo.guide .arr { width: 12px; border-width: 0 1px 1px 0; }

.tools { height: 48px; flex: none; display: grid; grid-template-rows: 23px 23px; grid-auto-flow: column; justify-content: space-between; padding: 0 32px 2px 27px; background: #f0f0f0; font-size: 16px; }
.tools button { gap: 4px; justify-content: flex-start; }
.tools svg { width: 16px; height: 16px; }

.sheet { flex: 1; min-height: 0; width: 656px; align-self: center; display: flex; flex-direction: column; justify-content: space-between; align-items: center; padding: 49px 0 53px; }
.mark { font: bold 9px/14px "Liberation Serif", serif; }
.head { align-self: flex-start; padding-left: 99px; }
.big { font: 260px/280px "DejaVu Sans", sans-serif; margin-bottom: 364px; padding-left: 4px; }
.pathbar { height: 19px; flex: none; background: #6891ff; text-align: center; font-size: 10px; line-height: 19px; }

/* icon strip */
.strip { background: #d9d9d9; border-radius: 5px 5px 0 0; display: flex; flex-direction: column; align-items: center; gap: 12px; padding-top: 26px; }
.strip button { height: 28px; width: 30px; }
.strip .fold-btn { margin-top: 348px; }

/* right column */
.right { display: flex; min-height: 0; padding-top: 1px; overflow: hidden; }
.form { flex: 1; min-width: 0; display: flex; flex-direction: column; gap: 5px; padding: 1px 3px 0 2px; }
.form > * { flex: none; }
.form h2 { height: 12px; line-height: 12px; background: #bfcddb; }
.row { display: flex; align-items: center; }
.row label { flex: none; }
.row input:not([type="checkbox"]), textarea { background: #fff; min-width: 0; }
.two { display: grid; grid-template-columns: 1fr 1fr; gap: 5px; }
.grow { flex: 1; }
.gearbtn { width: 20px; }
.tick { display: flex; align-items: center; gap: 7px; }
.row.tick { height: 20px; }
.tick input { appearance: none; flex: none; width: 12px; height: 12px; background: #fff; border: solid; border-width: 2px 1px 1px 2px; border-color: #808080 #e3e3e3 #e3e3e3 #808080; display: grid; place-items: center; }
.tick input:checked::before { content: ""; width: 7px; height: 4px; border: solid #000; border-width: 0 0 2px 2px; transform: rotate(-45deg); margin-top: -2px; }
.interval { height: 20px; padding: 0 42px 0 40px; justify-content: space-between; }
.spin { display: flex; width: 60px; height: 20px; padding: 2px; background: #fff; }
.spin input { flex: 1; }
.steps { width: 16px; display: flex; flex-direction: column; }
.steps button { height: 8px; border: 1px solid; border-color: #fff #777 #777 #fff; background: #f0f0f0; }
.steps svg { width: 5px; height: 2px; }
.web { height: 21px; gap: 4px; }
.switch { appearance: none; flex: none; width: 42px; height: 26px; border-radius: 13px; background: #fff; display: flex; align-items: center; }
.switch::before { content: ""; width: 22px; height: 22px; border-radius: 50%; background: #808080; }
.switch.sm { width: 43px; height: 21px; background: #dcdfe6; padding-left: 3px; }
.switch.sm::before { width: 15px; height: 15px; background: #fff; }
.store label { width: 24px; margin-right: 5px; }
.store .combo { width: 172px; }
textarea { width: 172px; height: 60px; padding: 3px 4px; resize: none; overflow: hidden; display: block; word-break: break-all; }
.placebtns { display: flex; flex-direction: column; gap: 14px; padding-left: 12px; }
.prefixrow { height: 27px; justify-content: space-between; }
.short { height: 16px; }
.prefixrow .short { width: 108px; }
.fix { padding-left: 36px; }
.fix label { margin-right: 5px; }
.fix input { flex: 1; height: 30px; }
.codes { display: grid; grid-template-columns: 53px 58px 1fr 58px; }
.codes label:nth-of-type(2) { padding-left: 5px; }
.codes input { width: 58px; height: 16px; text-align: center; }
.next label { width: 48px; margin-right: 5px; }
.next input { width: 113px; height: 30px; padding-left: 2px; }
.next button { flex: 1; padding-left: 5px; }
.checks { height: 13px; }
.switches { padding-top: 1px; }
.switches li { display: flex; justify-content: space-between; height: 30px; align-items: center; padding: 0 3px 0 2px; }
.switches li:first-child, .switches li:last-child { height: 26px; }
.switches label { display: flex; align-items: center; gap: 18px; }
.switches svg { width: 28px; height: 20px; }
.scanbtns { display: grid; grid-template-columns: 62px 62px; grid-template-rows: 35px 35px; column-gap: 5px; padding-left: 58px; margin-top: 38px; }
.scanbtns button { justify-content: flex-start; }
.narrow { width: 12px; }
.narrow .sbb, .narrow .thumb { border-right: 0; }
```
